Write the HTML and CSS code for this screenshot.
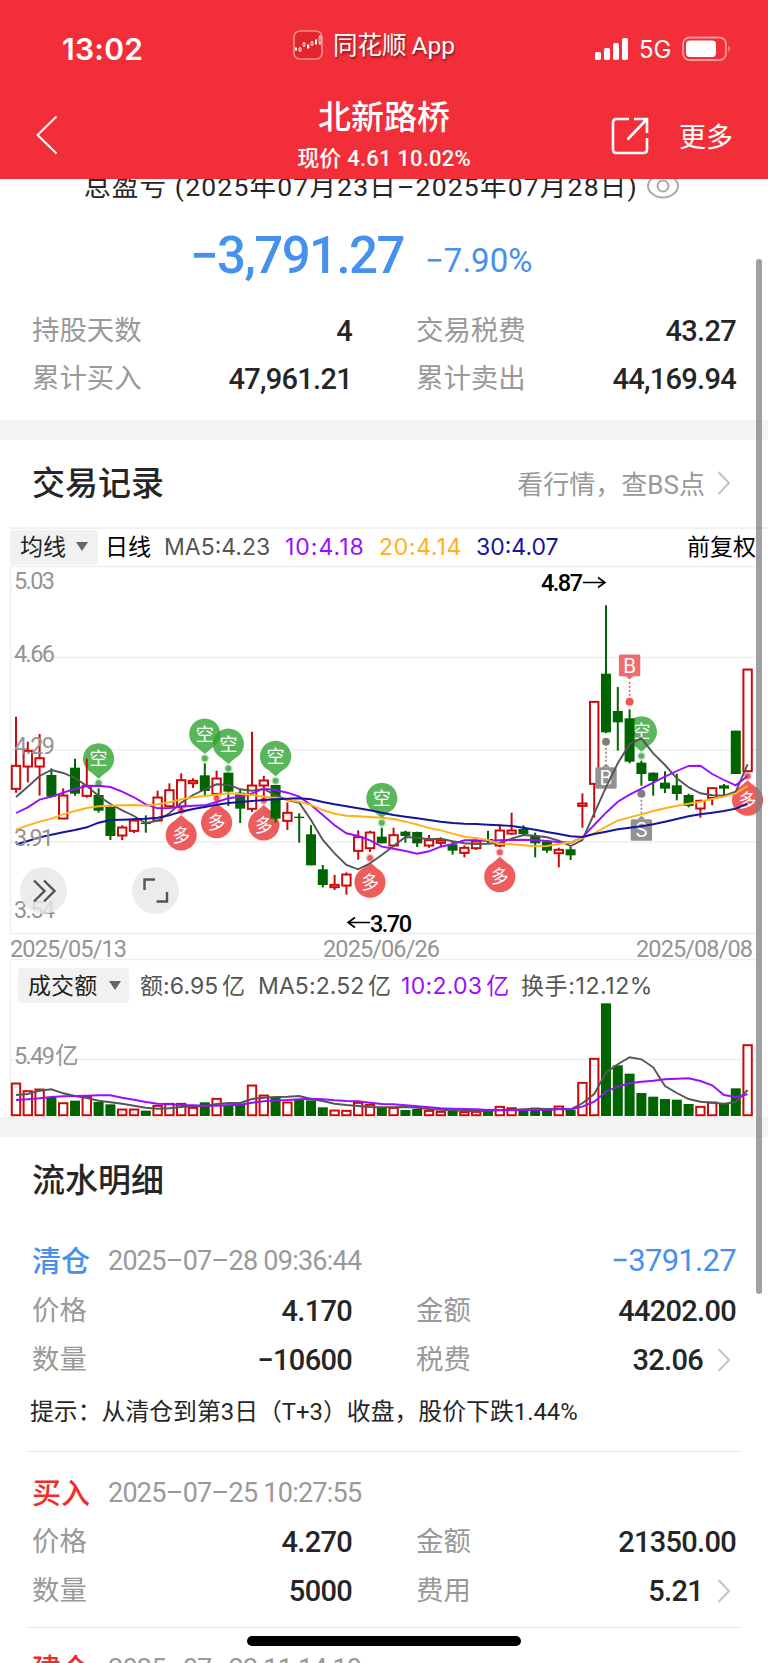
FILE: index.html
```
<!DOCTYPE html>
<html lang="zh-CN">

<head>
    <meta charset="UTF-8">
    <meta name="viewport" content="width=device-width, initial-scale=1.0">
    <title>北新路桥--交易记录</title>
    <link rel="stylesheet" href="styles.css">
</head>

<body>
    <header class="header">
        <div class="status">
            <span class="time">13:02</span>
            <div class="app">
                <svg class="app-icon" width="30" height="30" viewBox="0 0 30 30">
                    <rect x="1" y="1" width="28" height="28" rx="6" fill="#e3252b" stroke="#f78e90" stroke-width="1.6" />
                    <path d="M3 17v4M7 17v5M11 12v5M15 14v5M19 11v5M23 9v6M27 5v10" stroke="#fff" stroke-width="1" />
                    <path d="M2 18h2v2h-2zM14 15h2.4v3h-2.4zM22 10h2v4h-2z" fill="#fff" />
                    <path d="M6 18h2v3H6zM10 13h2v3h-2zM18 12h2v3h-2zM26 7h2v6h-2z" fill="#e3252b" stroke="#fff" stroke-width=".8" />
                </svg>
                <span>同花顺 App</span>
            </div>
            <div class="signal">
                <svg width="36" height="24" viewBox="0 0 36 24" fill="#fff">
                    <rect x="1" y="15" width="6" height="8" rx="1.8" />
                    <rect x="10" y="11" width="6" height="12" rx="1.8" />
                    <rect x="19" y="6" width="6" height="17" rx="1.8" />
                    <rect x="28" y="1" width="6" height="22" rx="1.8" />
                </svg>
                <span>5G</span>
                <svg width="50" height="26" viewBox="0 0 50 26">
                    <rect x="1" y="1.5" width="43" height="22.5" rx="6.5" fill="none" stroke="#f99a9c" stroke-width="1.8" />
                    <rect x="4" y="4.5" width="30" height="16.5" rx="4" fill="#fff" />
                    <path d="M46.500 9.500q3 3.200 0 6.600z" fill="#f99a9c" />
                </svg>
            </div>
        </div>
        <div class="nav">
            <svg class="back" width="24" height="42" viewBox="0 0 24 42">
                <path d="M21.500 2.500 2.500 21l19 18.500" fill="none" stroke="#fff" stroke-width="2" />
            </svg>
            <div class="stock">
                <h1>北新路桥</h1>
                <p>现价 4.61 10.02%</p>
            </div>
            <div class="actions">
                <svg width="38" height="38" viewBox="0 0 38 38" fill="none" stroke="#fff" stroke-width="2.6">
                    <path d="M18 2H5.500Q2 2 2 5.500V32.500Q2 36 5.500 36H32.500Q36 36 36 32.500V21M23 2H36V16M35.500 2.500 16.500 22.500" />
                </svg>
                <span>更多</span>
            </div>
        </div>
    </header>

    <section class="summary">
        <div class="period">
            <span>总盈亏 (2025年07月23日–2025年07月28日)</span>
            <svg width="34" height="26" viewBox="0 0 34 26" fill="none" stroke="#aaa" stroke-width="2">
                <path d="M2 13C2 7 9 1.500 17 1.500S32 7 32 13 25 24.500 17 24.500 2 19 2 13z" />
                <circle cx="17" cy="13" r="5.500" />
            </svg>
        </div>
        <div class="total">
            <span class="amount">−3,791.27</span>
            <span class="rate">−7.90%</span>
        </div>
        <dl class="grid">
            <dt>持股天数</dt>
            <dd>4</dd>
            <dt>交易税费</dt>
            <dd>43.27</dd>
            <dt>累计买入</dt>
            <dd>47,961.21</dd>
            <dt>累计卖出</dt>
            <dd>44,169.94</dd>
        </dl>
    </section>

    <section class="record">
        <div class="title">
            <h2>交易记录</h2>
            <a href="javascript:;">看行情，查BS点
                <svg class="arrow" width="14" height="26" viewBox="0 0 14 26">
                    <path d="M1.500 2 12 13 1.500 24" />
                </svg>
            </a>
        </div>
        <div class="ma-bar">
            <span class="select">均线<i></i></span>
            <span class="day">日线</span>
            <span class="ma5">MA5:4.23</span>
            <span class="ma10">10:4.18</span>
            <span class="ma20">20:4.14</span>
            <span class="ma30">30:4.07</span>
            <span class="right">前复权</span>
        </div>
        <svg class="kline" width="768" height="394" viewBox="0 566 768 394">
            <path class="line" d="M10 566.500H757M10.500 566V934M10 657.500H757M10 750H757M10 842H757M10 933.500H757M10 959.500H757" />
            <g id="kline"></g>
            <g class="axis">
                <text x="14" y="589" textLength="41">5.03</text>
                <text x="14" y="661.500" textLength="41">4.66</text>
                <text x="14" y="753.500" textLength="41">4.29</text>
                <text x="14" y="845.500" textLength="40">3.91</text>
                <text x="14" y="917.500" textLength="41">3.54</text>
                <text x="10" y="957" textLength="117">2025/05/13</text>
                <text x="323" y="957" textLength="117">2025/06/26</text>
                <text x="636" y="957" textLength="117">2025/08/08</text>
            </g>
            <g class="peak">
                <text x="541" y="591" textLength="42">4.87</text>
                <path d="M583 582.500H605M598 577.500 605 582.500 598 587.500" />
                <text x="370" y="931.500" textLength="42">3.70</text>
                <path d="M370 922.500H348M355 917.500 348 922.500 355 927.500" />
            </g>
            <g class="tool">
                <circle cx="43.500" cy="890.500" r="23.500" />
                <path d="M34 880.500 44.500 891 34 901.500M44 880.500 54.500 891 44 901.500" />
                <circle cx="155.500" cy="890.500" r="23.500" />
                <path d="M144.500 890V879.500H155M167 892V901.500H156.500" />
            </g>
        </svg>
        <div class="vol-bar">
            <span class="select">成交额<i></i></span>
            <span class="v1">额:6.95 亿</span>
            <span class="v2">MA5:2.52 亿</span>
            <span class="v3">10:2.03 亿</span>
            <span class="v4">换手:12.12%</span>
        </div>
        <svg class="vol" width="768" height="113" viewBox="0 1004 768 113">
            <path class="line" d="M10.500 1004V1117M10 1059.500H757" />
            <g id="vol"></g>
            <g class="axis">
                <text x="14" y="1063.500" textLength="41">5.49</text>
                <text x="55" y="1063.500" textLength="24">亿</text>
            </g>
        </svg>
    </section>

    <section class="detail">
        <div class="title">
            <h2>流水明细</h2>
        </div>
        <div class="item sell">
            <div class="item-head">
                <b class="blue">清仓</b>
                <time>2025–07–28 09:36:44</time>
                <strong class="blue">−3791.27</strong>
            </div>
            <dl class="grid">
                <dt>价格</dt>
                <dd>4.170</dd>
                <dt>金额</dt>
                <dd>44202.00</dd>
                <dt>数量</dt>
                <dd>−10600</dd>
                <dt>税费</dt>
                <dd>32.06
                    <svg class="arrow" width="14" height="26" viewBox="0 0 14 26">
                        <path d="M1.500 2 12 13 1.500 24" />
                    </svg>
                </dd>
            </dl>
            <p class="tip">提示：从清仓到第3日（T+3）收盘，股价下跌1.44%</p>
        </div>
        <div class="item">
            <div class="item-head">
                <b class="red">买入</b>
                <time>2025–07–25 10:27:55</time>
            </div>
            <dl class="grid">
                <dt>价格</dt>
                <dd>4.270</dd>
                <dt>金额</dt>
                <dd>21350.00</dd>
                <dt>数量</dt>
                <dd>5000</dd>
                <dt>费用</dt>
                <dd>5.21
                    <svg class="arrow" width="14" height="26" viewBox="0 0 14 26">
                        <path d="M1.500 2 12 13 1.500 24" />
                    </svg>
                </dd>
            </dl>
        </div>
        <div class="item last">
            <div class="item-head">
                <b class="red">建仓</b>
                <time>2025–07–23 11:14:19</time>
            </div>
        </div>
    </section>
    <div class="scrollbar"></div>
    <div class="home"></div>
    <script src="chart.js"></script>
</body>

</html>
```
FILE: styles.css
```
html,
body,
h1,
h2,
p,
dl,
dd {
    margin: 0;
    padding: 0;
}

html {
    overflow: hidden;
}

body {
    position: relative;
    width: 768px;
    height: 1663px;
    overflow: hidden;
    background: #fff;
    color: #262626;
    font-family: Roboto, "Noto Sans CJK SC", sans-serif;
}

svg {
    display: block;
    flex: none;
    overflow: visible;
}

/* 顶部 */
.header {
    position: relative;
    z-index: 1;
    height: 179px;
    background: #f22f38;
    color: #fff;
}

.status {
    display: grid;
    grid-template-columns: 231px 1fr 231px;
    height: 92px;
    padding: 0 36px 0 62px;
    box-sizing: border-box;
}

.time {
    padding-top: 29px;
    font: 600 30px/40px Inter, sans-serif;
    letter-spacing: 0.3px;
}

.app {
    display: flex;
    gap: 10px;
    padding-top: 30px;
    font-size: 24.5px;
    line-height: 31px;
    white-space: nowrap;
    text-shadow: 1px 2px 2px rgba(0, 0, 0, .45);
}

.app span {
    word-spacing: -1px;
}

.signal {
    display: flex;
    justify-content: flex-end;
    align-items: center;
    height: 98px;
    font: 24px/30px Inter, sans-serif;
}

.signal span {
    margin: 2px 11px 0 9px;
    letter-spacing: -0.3px;
}

.nav {
    display: grid;
    grid-template-columns: 200px 1fr 200px;
    height: 87px;
    padding: 0 35px;
}

.back {
    margin-top: 22px;
}

.stock {
    text-align: center;
}

.stock h1 {
    padding-top: 2px;
    font-size: 33px;
    font-weight: 500;
    line-height: 48px;
}

.stock p {
    margin-top: 5px;
    font-size: 22px;
    font-weight: 500;
    line-height: 24px;
    letter-spacing: 0.2px;
}

.actions {
    display: flex;
    justify-content: flex-end;
    align-items: center;
    gap: 30px;
    height: 88px;
    font-size: 27px;
    line-height: 38px;
}

.actions span {
    margin-top: 3px;
}

/* 盈亏 */
.summary {
    height: 253px;
    margin-top: -12px;
    border-bottom: 20px solid #f4f4f4;
}

.period {
    display: flex;
    align-items: center;
    height: 40px;
    padding-left: 84px;
    font-size: 26.5px;
    white-space: nowrap;
}

.period span {
    width: 562px;
    margin-top: -5px;
    letter-spacing: 1.2px;
}

.period svg {
    margin-top: -3px;
}

.total {
    display: flex;
    align-items: baseline;
    padding-left: 190px;
    height: 101px;
    line-height: 97px;
    color: #4691ee;
}

.amount {
    width: 235px;
    font-size: 51px;
    font-weight: 500;
    letter-spacing: -1.6px;
}

.rate {
    position: relative;
    top: -1px;
    font-size: 33px;
}

.grid {
    display: grid;
    grid-template-columns: 152px 168px 152px 1fr;
    padding: 0 32px;
    line-height: 47.500px;
}

.grid dt {
    color: #999;
    font-size: 27.400px;
    white-space: nowrap;
}

.grid dt:nth-of-type(even) {
    padding-left: 64px;
}

.grid dd {
    display: flex;
    justify-content: flex-end;
    align-items: center;
    font-size: 29px;
    font-weight: 500;
    letter-spacing: -0.7px;
}

.arrow {
    margin: 0 5px 0 14px;
    fill: none;
    stroke: #c4c4c4;
    stroke-width: 2;
}

/* 交易记录 */
.record {
    border-bottom: 20px solid #f4f4f4;
}

.title {
    display: flex;
    justify-content: space-between;
    align-items: center;
    height: 87px;
    padding: 0 32px;
}

.title h2 {
    margin-top: -6px;
    font-size: 33px;
    font-weight: 500;
}

.title a {
    display: flex;
    align-items: center;
    margin-top: -2px;
    color: #999;
    font-size: 26px;
    text-decoration: none;
}

.title .arrow {
    margin-left: 12px;
}

.ma-bar,
.vol-bar {
    display: grid;
    align-items: center;
    font: 23px/34px Inter, "Noto Sans CJK SC", sans-serif;
    color: #555;
    white-space: nowrap;
}

.ma-bar {
    grid-template-columns: 95px 59px 121px 94px 97px 211px 1fr;
    height: 37px;
    margin-left: 10px;
    border-top: 2px solid #f0f0f0;
}

.ma-bar span {
    margin-top: -2px;
}

.vol-bar {
    grid-template-columns: 122px 118px 143px 120px 1fr;
    height: 44px;
    padding: 7px 0 0 7px;
    margin-left: 10px;
    border-left: 1px solid #eee;
    box-sizing: border-box;
    letter-spacing: 0.1px;
    word-spacing: -3px;
}

.select {
    display: flex;
    align-items: center;
    justify-content: space-between;
    height: 35px;
    width: 88px;
    padding: 0 10px;
    box-sizing: border-box;
    border-radius: 4px;
    background: #f1f1f1;
    color: #222;
}

.ma-bar .select {
    margin-top: 0;
    padding-bottom: 2px;
}

.vol-bar .select {
    width: 111px;
    padding-right: 8px;
}

.select i {
    border: 6px solid transparent;
    border-top: 9px solid #666;
    border-bottom: 0;
}

.day,
.right {
    color: #000;
}

.ma10,
.v3 {
    color: #9a0eff;
}

.ma10 {
    letter-spacing: 1px;
}

.v3 {
    letter-spacing: 0.3px;
}

.v4 {
    letter-spacing: 0.6px;
}

.ma20 {
    color: #ffb01c;
    letter-spacing: 0.7px;
}

.ma30 {
    color: #14149e;
}

.line {
    fill: none;
    stroke: #eee;
    stroke-width: 1.5;
}

.axis {
    fill: #949494;
    font-size: 23.500px;
}

.peak {
    font-size: 23.500px;
    font-weight: 500;
}

.peak path {
    fill: none;
    stroke: #000;
    stroke-width: 1.6;
}

.tool circle {
    fill: rgba(232, 232, 232, .82);
}

.tool path {
    fill: none;
    stroke: #555;
    stroke-width: 2.4;
}

.pin-text {
    fill: #fff;
    font-size: 18px;
    text-anchor: middle;
}

.trade-text {
    fill: #fff;
    font: 19.500px Inter, sans-serif;
    text-anchor: middle;
}

/* 流水明细 */
.detail .title {
    height: 88px;
}

.item {
    height: 175px;
    border-bottom: 1px solid #e6e6e6;
    margin: 0 27px;
}

.item.sell {
    height: 226px;
}

.item.last {
    height: 35px;
    border: 0;
}

.item .grid {
    padding: 0 5px;
    line-height: 48.500px;
}

.item-head {
    display: flex;
    align-items: center;
    height: 51px;
    padding: 15px 5px 0;
}

.sell .item-head {
    height: 53px;
    padding-top: 9px;
}

.item-head b {
    width: 76px;
    margin-top: -3px;
    font-size: 29px;
    font-weight: 500;
}

.item-head time {
    flex: 1;
    color: #999;
    font-size: 27px;
    letter-spacing: -0.75px;
    line-height: 40px;
}

.item-head strong {
    font-size: 31px;
    font-weight: 400;
    letter-spacing: -0.7px;
}

.item-head .blue {
    color: #4691ee;
}

.item-head .red {
    color: #f02d2d;
}

.tip {
    margin-left: 3px;
    font-size: 23.850px;
    line-height: 56px;
    white-space: nowrap;
}

.scrollbar {
    position: absolute;
    z-index: 2;
    top: 259px;
    left: 756px;
    width: 6px;
    height: 1035px;
    border-radius: 3px;
    background: rgba(128, 128, 128, .75);
}

.home {
    position: absolute;
    top: 1636px;
    left: 247px;
    width: 274px;
    height: 10px;
    border-radius: 5px;
    background: #000;
}
```
FILE: chart.js
```
// 每根K线: 涨跌, 最高, 实体上沿, 实体下沿, 最低 (单位 1/3 px)
var candles = [
    ['r', 50, 197, 266, 278], ['r', 125, 152, 199, 247], ['r', 102, 174, 199, 287], ['g', 205, 225, 290, 293],
    ['r', 265, 286, 355, 355], ['g', 176, 203, 281, 287], ['r', 176, 257, 287, 293], ['g', 265, 285, 332, 338],
    ['g', 318, 320, 408, 420], ['r', 376, 382, 406, 420], ['r', 355, 361, 392, 399], ['g', 346, 368, 371, 398],
    ['r', 272, 292, 361, 361], ['r', 250, 270, 318, 318], ['r', 220, 240, 318, 330], ['r', 235, 242, 249, 264],
    ['g', 190, 226, 273, 285], ['r', 212, 235, 281, 290], ['g', 218, 218, 275, 318], ['g', 267, 278, 326, 369],
    ['r', 95, 256, 326, 336], ['r', 228, 241, 256, 300], ['g', 255, 255, 356, 368], ['r', 307, 338, 362, 390],
    ['g', 340, 350, 354, 428], ['g', 376, 403, 496, 496], ['g', 495, 508, 555, 562], ['r', 525, 554, 561, 570],
    ['r', 517, 523, 556, 584], ['r', 391, 411, 452, 479], ['r', 392, 397, 444, 456], ['g', 383, 410, 430, 430],
    ['r', 383, 405, 436, 440], ['g', 392, 395, 408, 428], ['g', 395, 396, 430, 441], ['r', 405, 420, 436, 443],
    ['r', 412, 421, 428, 440], ['g', 425, 433, 452, 464], ['r', 436, 443, 458, 472], ['r', 412, 424, 444, 450],
    ['g', 392, 417, 421, 430], ['r', 376, 391, 436, 442], ['r', 338, 391, 400, 405], ['g', 376, 387, 402, 406],
    ['g', 398, 408, 430, 472], ['g', 420, 424, 452, 458], ['r', 443, 449, 459, 502], ['g', 440, 448, 466, 480],
    ['r', 280, 310, 317, 383], ['r', 5, 5, 251, 353], ['g', -284, -79, 97, 100], ['g', -39, 33, 67, 152],
    ['g', 28, 55, 185, 190], ['g', 182, 188, 222, 257], ['g', 217, 218, 243, 287], ['g', 214, 248, 266, 279],
    ['g', 221, 256, 282, 301], ['g', 281, 285, 318, 322], ['r', 299, 302, 325, 353], ['r', 263, 264, 293, 316],
    ['g', 252, 256, 266, 290], ['g', 92, 92, 222, 222], ['r', -92, -92, 213, 213]
];
var ma = {
    '#555': [291, 260, 228, 210, 219, 234, 258, 288, 312, 331, 348, 370, 362, 340, 308, 285, 268, 253, 254, 268, 272, 267, 286, 300, 308, 360, 420, 460, 495, 508, 490, 465, 438, 411, 413, 418, 416, 424, 430, 432, 431, 428, 416, 405, 407, 412, 422, 438, 420, 340, 262, 190, 132, 115, 160, 195, 235, 262, 280, 286, 287, 275, 193],
    '#9a0eff': [339, 322, 299, 290, 278, 267, 258, 257, 261, 275, 292, 313, 325, 324, 320, 317, 316, 306, 295, 290, 280, 266, 270, 278, 290, 315, 345, 376, 400, 408, 421, 440, 446, 453, 461, 454, 440, 432, 421, 421, 423, 421, 420, 419, 420, 423, 426, 428, 412, 375, 338, 305, 284, 266, 248, 230, 213, 198, 197, 222, 240, 256, 228],
    '#ffb01c': [389, 376, 365, 356, 343, 333, 324, 319, 317, 316, 315, 317, 313, 307, 298, 292, 288, 284, 280, 282, 285, 290, 293, 299, 305, 315, 330, 341, 347, 349, 351, 353, 357, 365, 374, 384, 391, 401, 410, 415, 420, 432, 433, 436, 439, 438, 432, 427, 414, 400, 380, 362, 352, 343, 333, 325, 317, 311, 305, 297, 290, 280, 257],
    '#14149e': [433, 423, 412, 404, 397, 390, 382, 368, 360, 359, 358, 356, 353, 346, 335, 327, 321, 314, 309, 306, 303, 300, 298, 296, 295, 298, 306, 313, 319, 325, 331, 338, 345, 350, 355, 360, 365, 369, 371, 372, 374, 376, 378, 383, 389, 396, 402, 409, 411, 402, 395, 388, 383, 379, 373, 365, 357, 349, 343, 338, 333, 326, 311]
};
// 成交额柱顶
var volumes = [430, 453, 448, 471, 489, 482, 470, 486, 493, 508, 508, 512, 497, 491, 491, 503, 487, 476, 494, 492, 436, 466, 472, 487, 480, 481, 502, 511, 512, 488, 494, 504, 503, 510, 507, 512, 515, 513, 516, 515, 507, 500, 504, 509, 503, 508, 499, 509, 428, 356, 190, 376, 401, 459, 470, 477, 479, 492, 500, 487, 490, 445, 315];
var volMa = {
    '#555': [465, 462, 452, 448, 460, 468, 474, 482, 487, 491, 497, 503, 506, 505, 501, 499, 498, 492, 489, 489, 477, 473, 471, 470, 468, 477, 483, 491, 495, 498, 501, 502, 502, 501, 503, 507, 509, 511, 513, 513, 512, 510, 509, 508, 506, 507, 507, 508, 490, 462, 398, 373, 352, 358, 382, 438, 459, 477, 485, 488, 491, 486, 450],
    '#9a0eff': [480, 478, 475, 471, 469, 468, 467, 466, 466, 473, 479, 486, 491, 493, 495, 496, 497, 497, 496, 494, 488, 484, 481, 480, 478, 476, 478, 481, 483, 484, 488, 492, 493, 496, 499, 502, 505, 506, 507, 508, 510, 511, 511, 510, 510, 509, 508, 508, 500, 485, 455, 440, 430, 425, 422, 418, 416, 415, 423, 436, 465, 471, 463]
};
// 多空信号: 第几根, 圆心
var pins = [
    ['空', 7, 176], ['空', 16, 102], ['空', 18, 132], ['空', 22, 169], ['空', 31, 295], ['空', 53, 95],
    ['多', 14, 405], ['多', 17, 368], ['多', 21, 375], ['多', 30, 547], ['多', 41, 530], ['多', 62, 301]
];
// 买卖点: 文字, 第几根, 圆点, 方块中心, 颜色
var trades = [
    ['B', 52, 5, -104, '#f06c6c', '#ef5555'],
    ['B', 50, 125, 234, '#929292', '#808080'],
    ['S', 53, 281, 390, '#929292', '#808080']
];

function getX(i) {
    return 16 + i * 11.8;
}

function bar(type, x, top, bottom) {
    if (type === 'g') {
        return '<rect x="' + (x - 5) + '" y="' + top + '" width="10" height="' + Math.max(bottom - top, 1.4) + '" fill="#006400"/>';
    }
    return '<rect x="' + (x - 4.2) + '" y="' + (top + 0.2) + '" width="8.4" height="' + (bottom - top) + '" fill="#fff" stroke="#cd0a0a" stroke-width="2"/>';
}

function drawLines(data, base) {
    var html = '';
    for (var color in data) {
        var points = data[color].map(function (v, i) {
            return getX(i).toFixed(1) + ',' + (base + v / 3).toFixed(1);
        });
        html += '<polyline points="' + points.join(' ') + '" fill="none" stroke="' + color + '" stroke-width="1.9"/>';
    }
    return html;
}

function drawPins() {
    var html = '';
    pins.forEach(function (p) {
        var x = getX(p[1]), y = 700 + p[2] / 3;
        var dir = p[0] === '空' ? 1 : -1;
        var color = dir === 1 ? '#31a431' : '#ea3434';
        html += '<g fill="' + color + '"><path fill-opacity=".8" d="M' + (x - 7) + ' ' + (y + dir * 14) +
            'A15.6 15.6 0 1 ' + (dir === 1 ? 1 : 0) + ' ' + (x + 7) + ' ' + (y + dir * 14) + 'L' + x + ' ' + (y + dir * 20) + 'z"/>' +
            '<circle cx="' + x + '" cy="' + (y + dir * 24.4) + '" r="4.2" fill-opacity=".3"/>' +
            '<circle cx="' + x + '" cy="' + (y + dir * 24.4) + '" r="2.8" fill-opacity=".75"/></g>' +
            '<text class="pin-text" x="' + x + '" y="' + (y + 6.5) + '">' + p[0] + '</text>';
    });
    return html;
}

function drawTrades() {
    var html = '';
    trades.forEach(function (t) {
        var x = getX(t[1]), dot = 700 + t[2] / 3, y = 700 + t[3] / 3;
        var dir = dot > y ? 1 : -1;
        html += '<circle cx="' + x + '" cy="' + dot + '" r="4" fill="' + t[5] + '"/>' +
            '<path d="M' + x + ' ' + (dot - dir * 6) + 'V' + (y + dir * 15) + '" stroke="' + t[5] + '" stroke-width="1.6" stroke-dasharray="2 2"/>' +
            '<rect x="' + (x - 10.7) + '" y="' + (y - 10.8) + '" width="21.4" height="21.6" rx="1.5" fill="' + t[4] + '"/>' +
            '<path d="M' + (x - 4) + ' ' + (y + dir * 10.7) + 'h8l-4 ' + dir * 3.5 + 'z" fill="' + t[4] + '"/>' +
            '<text class="trade-text" x="' + x + '" y="' + (y + 7.2) + '">' + t[0] + '</text>';
    });
    return html;
}

function init() {
    var k = '', v = '';
    candles.forEach(function (c, i) {
        var x = getX(i);
        var color = c[0] === 'g' ? '#006400' : '#cd0a0a';
        k += '<path d="M' + x + ' ' + (700 + c[1] / 3) + 'V' + (700 + c[4] / 3) + '" stroke="' + color + '" stroke-width="2"/>' +
            bar(c[0], x, 700 + c[2] / 3, 700 + c[3] / 3);
        v += bar(c[0], x, 940 + volumes[i] / 3, c[0] === 'g' ? 1116 : 1115);
    });
    document.querySelector('#kline').innerHTML = drawPins() + k + drawTrades() + drawLines(ma, 700);
    document.querySelector('#vol').innerHTML = v + drawLines(volMa, 940);
}
init();
```
